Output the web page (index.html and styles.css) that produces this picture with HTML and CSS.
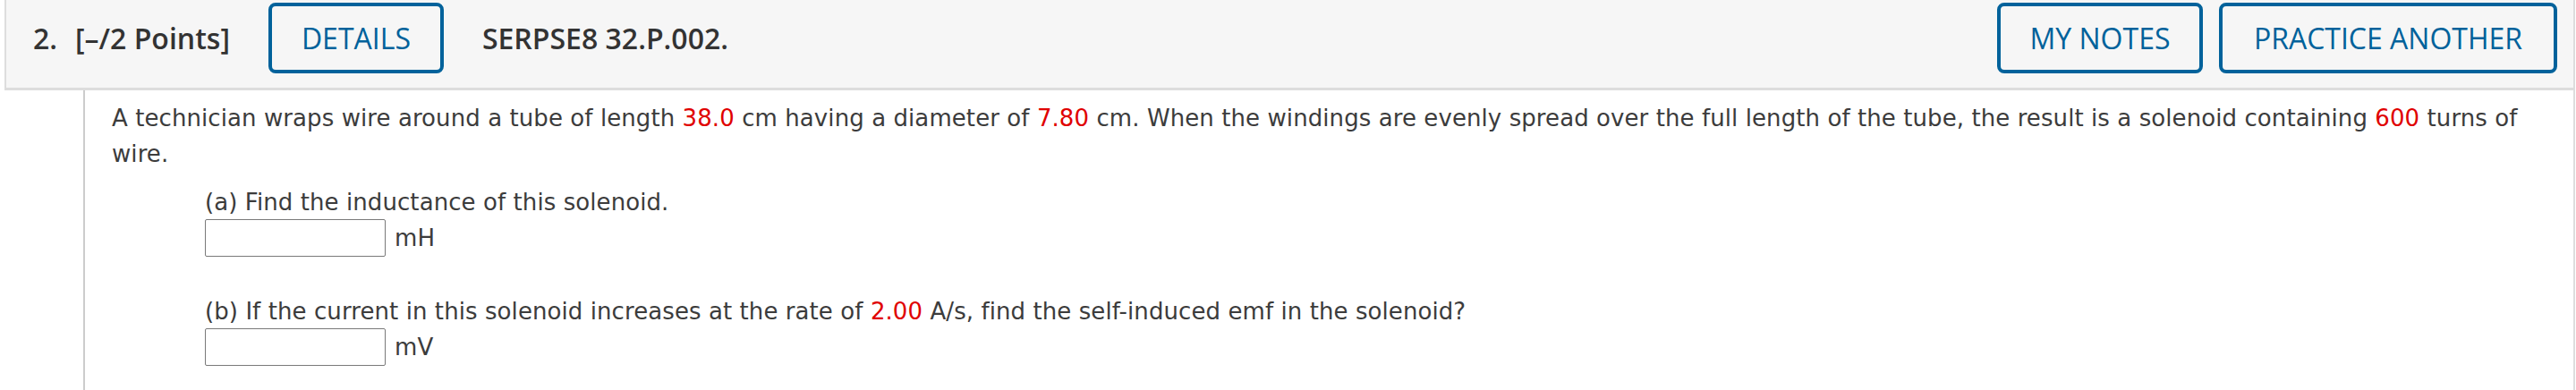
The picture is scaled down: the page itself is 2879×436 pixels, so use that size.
FILE: index.html
```html
<!DOCTYPE html>
<html lang="en">
<head>
<meta charset="utf-8">
<title>SERPSE8 32.P.002.</title>
<link rel="stylesheet" href="styles.css">
</head>
<body>
<div class="question">
  <div class="qhead">
    <span class="qnum">2.</span>
    <span class="qpoints">[–/2 Points]</span>
    <button class="qbtn btn-details">DETAILS</button>
    <span class="qid">SERPSE8 32.P.002.</span>
    <span class="spacer"></span>
    <button class="qbtn btn-notes">MY NOTES</button>
    <button class="qbtn btn-practice">PRACTICE ANOTHER</button>
  </div>
  <div class="qbody">
    <p class="stem">A technician wraps wire around a tube of length <span class="val">38.0</span> cm having a diameter of <span class="val">7.80</span> cm. When the windings are evenly spread over the full length of the tube, the result is a solenoid containing <span class="val">600</span> turns of wire.</p>
    <div class="part part-a">
      <p class="prompt">(a) Find the inductance of this solenoid.</p>
      <div class="answer-row">
        <input class="answer" type="text">
        <span class="unit">mH</span>
      </div>
    </div>
    <div class="part part-b">
      <p class="prompt">(b) If the current in this solenoid increases at the rate of <span class="val">2.00</span> A/s, find the self-induced emf in the solenoid?</p>
      <div class="answer-row">
        <input class="answer" type="text">
        <span class="unit">mV</span>
      </div>
    </div>
  </div>
</div>
</body>
</html>
```

FILE: styles.css
```css
html, body {
  margin: 0;
  padding: 0;
  background: #ffffff;
}

body {
  width: 2879px;
  height: 436px;
  overflow: hidden;
}

.question {
  padding-left: 5px;
  padding-right: 1px;
}

.qhead {
  display: flex;
  align-items: center;
  height: 79px;
  padding: 3px 18px 16px 30px;
  background: #f6f6f6;
  border-left: 2px solid #dddddd;
  border-right: 2px solid #dddddd;
  border-bottom: 3px solid #dddddd;
  font-family: "Open Sans", "Liberation Sans", sans-serif;
  font-size: 32px;
  color: #333333;
}

.qnum {
  font-weight: 600;
  margin-right: 20px;
}

.qpoints {
  font-weight: 600;
  margin-right: 43px;
}

.qid {
  font-weight: 600;
  margin-left: 43px;
}

.spacer {
  flex: 1;
}

.qbtn {
  box-sizing: border-box;
  height: 79px;
  padding: 0 30px;
  background: transparent;
  border: 4px solid #00629b;
  border-radius: 8px;
  color: #00629b;
  font-family: "Open Sans", "Liberation Sans", sans-serif;
  font-size: 32px;
  font-weight: 400;
  line-height: 1;
}

.btn-details {
  width: 196px;
}

.btn-notes {
  width: 230px;
  margin-right: 18px;
}

.btn-practice {
  width: 378px;
}

.qbody {
  margin-left: 88px;
  border-left: 2px solid #cccccc;
  border-right: 2px solid #dddddd;
  padding: 11px 30px 40px 30px;
  height: 290px;
  font-family: Verdana, "DejaVu Sans", sans-serif;
  font-size: 26px;
  letter-spacing: 0.08px;
  line-height: 40px;
  color: #3c3c3c;
}

.stem {
  margin: 0;
}

.val {
  color: #e00000;
}

.part {
  margin-left: 104px;
}

.part-a {
  margin-top: 14px;
}

.part-b {
  margin-top: 41px;
}

.prompt {
  margin: 0;
}

.answer-row {
  display: flex;
  align-items: center;
  margin-top: -1px;
}

.answer {
  box-sizing: border-box;
  width: 202px;
  height: 42px;
  margin: 0;
  border: 1px solid #7a7a7a;
  border-radius: 2px;
  background: #ffffff;
}

.unit {
  margin-left: 10px;
}
```
